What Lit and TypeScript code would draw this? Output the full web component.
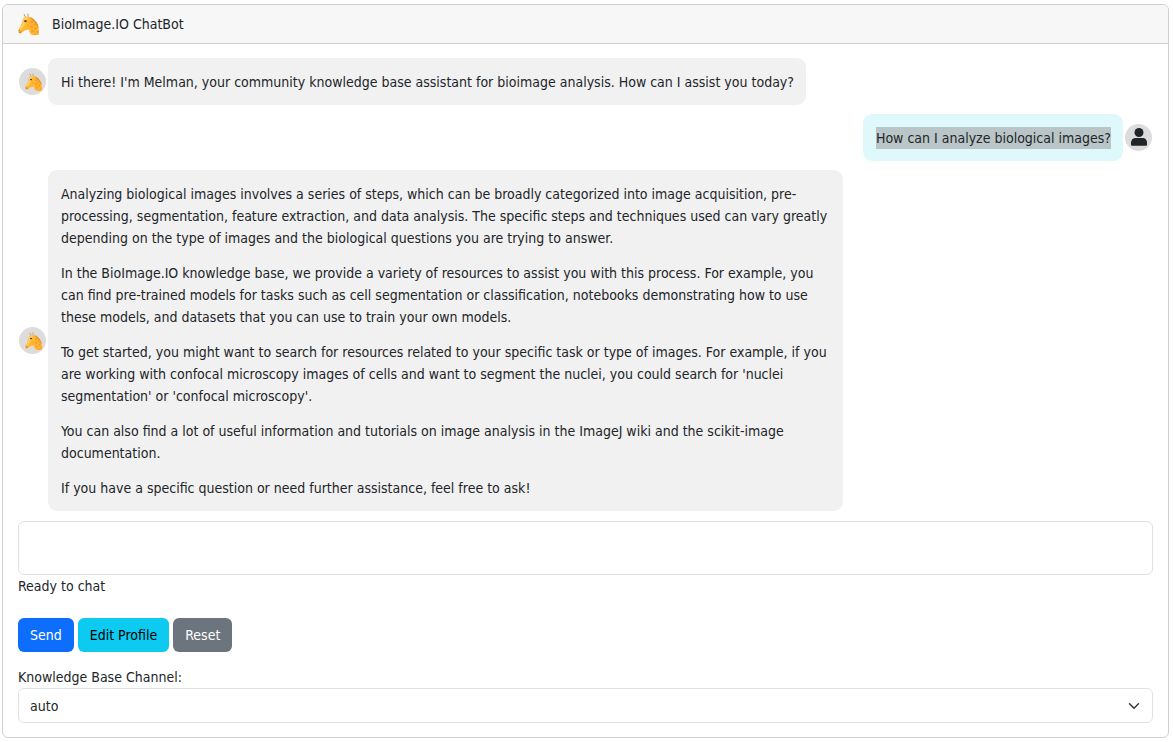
import { LitElement, html, css, svg } from "lit";
import { customElement, property } from "lit/decorators.js";

type Message = { from: "bot" | "user"; paragraphs: string[]; selected?: boolean };

const MESSAGES: Message[] = [
  {
    from: "bot",
    paragraphs: [
      "Hi there! I'm Melman, your community knowledge base assistant for bioimage analysis. How can I assist you today?",
    ],
  },
  { from: "user", paragraphs: ["How can I analyze biological images?"], selected: true },
  {
    from: "bot",
    paragraphs: [
      "Analyzing biological images involves a series of steps, which can be broadly categorized into image acquisition, pre-processing, segmentation, feature extraction, and data analysis. The specific steps and techniques used can vary greatly depending on the type of images and the biological questions you are trying to answer.",
      "In the BioImage.IO knowledge base, we provide a variety of resources to assist you with this process. For example, you can find pre-trained models for tasks such as cell segmentation or classification, notebooks demonstrating how to use these models, and datasets that you can use to train your own models.",
      "To get started, you might want to search for resources related to your specific task or type of images. For example, if you are working with confocal microscopy images of cells and want to segment the nuclei, you could search for 'nuclei segmentation' or 'confocal microscopy'.",
      "You can also find a lot of useful information and tutorials on image analysis in the ImageJ wiki and the scikit-image documentation.",
      "If you have a specific question or need further assistance, feel free to ask!",
    ],
  },
];

const giraffe = svg`
  <path d="M22 12 L18 4 M30 10 L29 3" stroke="#c39a6b" stroke-width="3" stroke-linecap="round"/>
  <path d="M17 14 Q25 9 35 12 Q48 17 55 28 Q61 37 61 45 L61 66 L44 66 Q33 62 33 50 Q26 49 20 52 Q14 55 10 59 Q5 62 2 58 Q-1 54 2 49 Q9 38 12 28 Q13 18 17 14Z" fill="#ffb733"/>
  <path d="M18 15 Q25 11 31 13 Q24 24 20 34 Q15 44 7 51 L4 49 Q10 39 13 28 Q14 19 18 15Z" fill="#ffcf5e"/>
  <path d="M36 12 Q48 17 55 28 Q61 37 61 45 L59 42 Q53 28 36 14Z" fill="#dd8b25"/>
  <g fill="#fb9d22">
    <path d="M38 22 l6 1 1 5 -5 3 -4 -4Z"/>
    <path d="M47 29 l5 2 2 6 -6 1 -3 -4Z"/>
    <path d="M37 36 l7 2 0 6 -5 1 -4 -4Z"/>
    <path d="M50 42 l6 0 1 5 -4 4 -5 -3Z"/>
    <path d="M40 49 l5 1 2 5 -4 3 -4 -3Z"/>
    <path d="M55 54 l6 -2 0 8 -6 -1Z"/>
    <path d="M47 61 l6 -1 1 5 -7 0Z"/>
    <path d="M27 36 l4 -1 2 4 -5 1Z"/>
  </g>
  <ellipse cx="22" cy="24" rx="4" ry="3" fill="#5a4335"/>
  <path d="M3 52 Q5 51 6 53 M4 58 Q8 57 10 55" stroke="#8a5528" stroke-width="2" fill="none"/>
`;

@customElement("giraffe-icon")
export class GiraffeIcon extends LitElement {
  static styles = css`
    :host { display: block; }
    svg { display: block; width: 100%; height: auto; }
  `;
  render() {
    return html`<svg viewBox="0 0 62 66" role="img" aria-label="Giraffe">${giraffe}</svg>`;
  }
}

@customElement("chat-message")
export class ChatMessage extends LitElement {
  @property({ attribute: false }) message!: Message;

  static styles = css`
    :host { display: block; }
    .row { display: flex; align-items: center; gap: 2px; }
    .row.user { flex-direction: row-reverse; }
    .avatar {
      box-sizing: border-box;
      flex: none;
      display: flex;
      align-items: center;
      justify-content: center;
      width: 27px;
      height: 27px;
      border-radius: 50%;
      background: #dcdcdc;
      color: #212529;
    }
    .bot .avatar { margin-left: 1px; padding-left: 2px; }
    .user .avatar { margin-right: 1px; padding-bottom: 2px; }
    .avatar giraffe-icon { width: 17px; }
    .avatar svg { display: block; width: 18px; height: 18px; }
    .bubble {
      box-sizing: border-box;
      max-width: 70%;
      padding: 13px 12px 12px 13px;
      border-radius: 9px;
      background: #f1f1f1;
    }
    .user .bubble { background: #dff8fb; }
    p { margin: 0; }
    p + p { margin-top: 13px; }
    .selected p { background: #b9c5c6; }
  `;

  render() {
    const { from, paragraphs, selected } = this.message;
    return html`
      <div class="row ${from}">
        <div class="avatar">
          ${from === "bot"
            ? html`<giraffe-icon></giraffe-icon>`
            : html`<svg viewBox="0 0 18 18" fill="currentColor" role="img" aria-label="You">
                <circle cx="9" cy="4.500" r="4.500" />
                <path d="M5 10h8c2.500 0 4 2.300 4 5v1.500c0 .8-.5 1.300-1.200 1.300H2.200C1.500 17.800 1 17.300 1 16.500V15c0-2.700 1.500-5 4-5Z" />
              </svg>`}
        </div>
        <div class="bubble ${selected ? "selected" : ""}">
          ${paragraphs.map((text) => html`<p>${text}</p>`)}
        </div>
      </div>
    `;
  }
}

@customElement("app-root")
export class AppRoot extends LitElement {
  static styles = css`
    :host {
      display: block;
      padding: 4px 4px 4px 2px;
      background: #fff;
      color: #212529;
      font: 14px/22px "DejaVu Sans Condensed", "Open Sans", sans-serif;
    }
    .card { border: 1px solid #cfcfcf; border-radius: 6px; overflow: hidden; }
    header {
      display: flex;
      align-items: center;
      gap: 13px;
      padding: 8px 15px;
      border-bottom: 1px solid #cfcfcf;
      background: #f7f7f7;
    }
    header giraffe-icon { width: 21px; }
    h1 { margin: 0; font-size: 14px; font-weight: 400; line-height: 22px; }
    main { padding: 14px 15px; }
    .messages { display: grid; gap: 9px; }
    textarea, select {
      box-sizing: border-box;
      display: block;
      width: 100%;
      border: 1px solid #dee2e6;
      border-radius: 6px;
      background: #fff;
      color: inherit;
      font: inherit;
    }
    textarea { height: 54px; margin-top: 10px; padding: 5px 11px; resize: none; }
    .status { margin: 0; }
    .actions { display: flex; gap: 4px; margin: 21px 0 14px; }
    button {
      padding: 6px 12px;
      border: 0;
      border-radius: 6px;
      font: inherit;
    }
    .primary { background: #0d6efd; color: #fff; }
    .info { background: #0dcaf0; color: #000; }
    .secondary { background: #6c757d; color: #fff; }
    label { display: block; }
    .select { display: grid; align-items: center; }
    .select > * { grid-area: 1 / 1; }
    select { height: 35px; padding: 0 32px 0 11px; appearance: none; }
    .chevron {
      justify-self: end;
      width: 12px;
      height: 12px;
      margin-right: 13px;
      pointer-events: none;
    }
  `;

  render() {
    return html`
      <div class="card">
        <header>
          <giraffe-icon></giraffe-icon>
          <h1>BioImage.IO ChatBot</h1>
        </header>
        <main>
          <div class="messages">
            ${MESSAGES.map((m) => html`<chat-message .message=${m}></chat-message>`)}
          </div>
          <textarea aria-label="Message"></textarea>
          <p class="status">Ready to chat</p>
          <div class="actions">
            <button class="primary" type="button">Send</button>
            <button class="info" type="button">Edit Profile</button>
            <button class="secondary" type="button">Reset</button>
          </div>
          <label for="channel">Knowledge Base Channel:</label>
          <div class="select">
            <select id="channel"><option>auto</option></select>
            <svg class="chevron" viewBox="0 0 16 16" fill="none" stroke="#343a40" stroke-width="2" stroke-linecap="round" stroke-linejoin="round" aria-hidden="true">
              <path d="m2 5 6 6 6-6" />
            </svg>
          </div>
        </main>
      </div>
    `;
  }
}
